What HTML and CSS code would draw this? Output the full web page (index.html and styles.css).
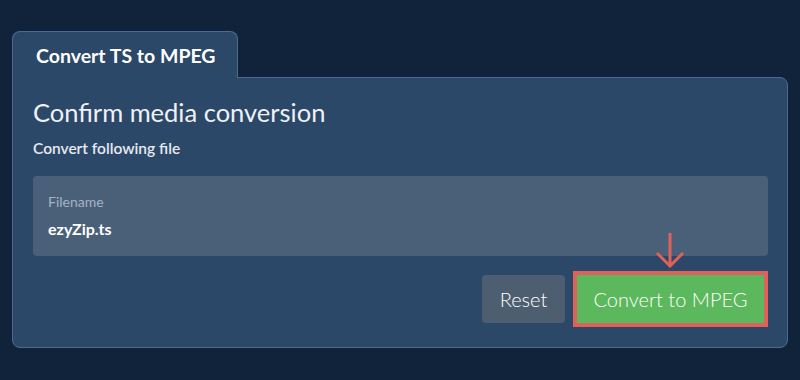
FILE: index.html
```html
<!DOCTYPE html>
<html lang="en">
<head>
    <meta charset="UTF-8">
    <meta name="viewport" content="width=device-width, initial-scale=1.0">
    <title>Convert TS to MPEG</title>
    <link rel="stylesheet" href="styles.css">
</head>
<body>
    <div class="panel">
        <div class="tabs">
            <div class="tab">Convert TS to MPEG</div>
        </div>
        <div class="card">
            <h2>Confirm media conversion</h2>
            <p class="sub">Convert following file</p>

            <div class="file-box">
                <div class="file-label">Filename</div>
                <div class="file-name">ezyZip.ts</div>
            </div>

            <div class="actions">
                <button class="btn btn-reset">Reset</button>
                <div class="convert-wrap">
                    <svg class="arrow" width="30" height="36" viewBox="0 0 30 36">
                        <path d="M15 1 V34 M2 21 L15 34 L28 21" fill="none" stroke="#e0605b" stroke-width="3"/>
                    </svg>
                    <button class="btn btn-convert">Convert to MPEG</button>
                </div>
            </div>
        </div>
    </div>
</body>
</html>
```

FILE: styles.css
```css
body {
    margin: 0;
    background-color: #10233a;
    font-family: Lato, "Noto Sans", sans-serif;
    color: #ffffff;
}
.panel {
    padding: 30px 12px 0 12px;
    width: 776px;
}
.tabs {
    display: flex;
}
.tab {
    background-color: #2c4868;
    border: 1px solid #4d6b8e;
    border-bottom: none;
    border-radius: 8px 8px 0 0;
    padding: 12px 0 11px 23px;
    font-size: 19.5px;
    font-weight: bold;
    width: 201px;
    position: relative;
    top: 1px;
    z-index: 1;
}
.card {
    background-color: #2c4868;
    border: 1px solid #4d6b8e;
    border-radius: 0 8px 8px 8px;
    padding: 19px 19px 24px 20px;
}
h2 {
    margin: 0;
    font-size: 25.5px;
    font-weight: normal;
    color: #eef1f5;
}
.sub {
    margin: 12px 0 19px 0;
    font-size: 15.5px;
    font-weight: 600;
    color: #e6eaf0;
}
.file-box {
    background-color: #4a6079;
    border-radius: 4px;
    padding: 17px 15px 18px 15px;
}
.file-label {
    font-size: 14px;
    color: #a7b3c2;
}
.file-name {
    margin-top: 9px;
    font-size: 16px;
    font-weight: bold;
}
.actions {
    display: flex;
    justify-content: flex-end;
    align-items: center;
    margin-top: 19px;
    margin-right: 4px;
}
.btn {
    font-family: Lato, "Noto Sans", sans-serif;
    font-size: 20px;
    font-weight: 300;
    color: #ffffff;
    border: none;
    border-radius: 4px;
    height: 48px;
    cursor: pointer;
}
.btn-reset {
    background-color: #4d5e70;
    width: 83px;
}
.convert-wrap {
    position: relative;
    margin-left: 12px;
}
.btn-convert {
    background-color: #5cb85c;
    width: 187px;
    outline: 4px solid #e0605b;
    border-radius: 0;
    display: block;
}
.arrow {
    position: absolute;
    left: 78px;
    top: -43px;
}
```
